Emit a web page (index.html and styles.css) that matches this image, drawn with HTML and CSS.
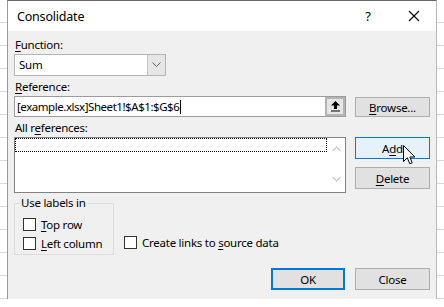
FILE: index.html
```html
<!DOCTYPE html>
<html lang="en">
<head>
    <meta charset="UTF-8">
    <title>Consolidate</title>
    <link rel="stylesheet" href="styles.css">
</head>
<body>

    <div class="dialog">

        <!-- Title bar -->
        <div class="titlebar">
            <span class="title">Consolidate</span>
            <span class="help">?</span>
            <svg class="close-x" width="12" height="12" viewBox="0 0 12 12">
                <path d="M1 1 L11 11 M11 1 L1 11" stroke="#000" stroke-width="1.1" fill="none"/>
            </svg>
        </div>

        <div class="content">
            <div class="lbl"><u>F</u>unction:</div>
            <div class="select">
                <span class="select-value">Sum</span>
                <span class="select-btn">
                    <svg width="9" height="6" viewBox="0 0 9 6">
                        <path d="M0.5 0.5 L4.5 4.5 L8.5 0.5" stroke="#606060" stroke-width="1" fill="none"/>
                    </svg>
                </span>
            </div>

            <div class="lbl lbl-ref"><u>R</u>eference:</div>
            <div class="row">
                <div class="input">
                    <span class="input-text">[example.xlsx]Sheet1!$A$1:$G$6</span><span class="caret"></span>
                    <span class="ref-btn">
                        <svg width="9" height="11" viewBox="0 0 9 11">
                            <path d="M4.5 0 L9 4.5 L6 4.5 L6 8 L3 8 L3 4.5 L0 4.5 Z" fill="#000"/>
                            <rect x="0" y="9.5" width="9" height="1" fill="#000"/>
                        </svg>
                    </span>
                </div>
                <button class="btn btn-browse"><u>B</u>rowse...</button>
            </div>

            <div class="lbl lbl-all">All r<u>e</u>ferences:</div>
            <div class="row row-list">
                <div class="listbox">
                    <div class="list-items">
                        <div class="focus-item"></div>
                    </div>
                    <div class="scrollbar">
                        <svg width="9" height="6" viewBox="0 0 9 6">
                            <path d="M0.5 5 L4.5 1 L8.5 5" stroke="#c8c8c8" stroke-width="1.2" fill="none"/>
                        </svg>
                        <svg width="9" height="6" viewBox="0 0 9 6">
                            <path d="M0.5 1 L4.5 5 L8.5 1" stroke="#c8c8c8" stroke-width="1.2" fill="none"/>
                        </svg>
                    </div>
                </div>
                <div class="side">
                    <button class="btn btn-hover">A<u>d</u>d</button>
                    <button class="btn"><u>D</u>elete</button>
                </div>
            </div>

            <div class="options">
                <fieldset class="group">
                    <legend>Use labels in</legend>
                    <div class="check"><span class="box"></span><span><u>T</u>op row</span></div>
                    <div class="check"><span class="box"></span><span><u>L</u>eft column</span></div>
                </fieldset>
                <div class="check check-links"><span class="box"></span><span>Create links to <u>s</u>ource data</span></div>
            </div>

            <div class="actions">
                <button class="btn btn-default">OK</button>
                <button class="btn">Close</button>
            </div>
        </div>

        <!-- mouse pointer over the Add button -->
        <svg class="pointer" width="13" height="21" viewBox="0 0 13 21">
            <path d="M0.5 0.5 L0.5 16.5 L4.3 12.8 L6.8 18.8 L9.2 17.8 L6.8 12 L11.8 12 Z" fill="#fff" stroke="#000" stroke-width="1" stroke-linejoin="round"/>
        </svg>
    </div>

</body>
</html>
```

FILE: styles.css
```css
body {
    margin: 0;
    padding: 0;
    width: 444px;
    height: 307px;
    overflow: hidden;
    font-family: "Noto Sans", Arial, sans-serif;
    font-size: 11.5px;
    letter-spacing: -0.25px;
    color: #000;
    background-color: #fff;
    background-image: repeating-linear-gradient(to bottom, transparent 0, transparent 22px, #d8d8d8 22px, #d8d8d8 23px, transparent 23px, transparent 21px);
}
u {
    text-decoration-thickness: 1px;
    text-underline-offset: 2px;
}
.dialog {
    position: relative;
    margin-left: 7px;
    width: 428px;
    height: 298px;
    border-top: 1px solid #6a6a6a;
    border-left: 1px solid #9a9a9a;
    border-right: 1px solid #b8b8b8;
    background-color: #f0f0f0;
}
.titlebar {
    display: flex;
    align-items: center;
    height: 30px;
    background-color: #fff;
    padding-left: 9px;
}
.title {
    flex: 1;
    font-size: 12.5px;
    letter-spacing: -0.2px;
}
.help {
    width: 20px;
    text-align: center;
    font-size: 13px;
}
.close-x {
    margin: 0 16px 0 30px;
}
.content {
    padding: 6px 6px 0 6px;
}
.lbl {
    height: 16px;
    line-height: 16px;
    padding-left: 1px;
}
.select {
    display: flex;
    width: 150px;
    height: 20px;
    margin-top: 1px;
    border: 1px solid #b4b4b4;
    background-color: #fff;
}
.select-value {
    flex: 1;
    line-height: 20px;
    padding-left: 4px;
}
.select-btn {
    display: flex;
    align-items: center;
    justify-content: center;
    width: 17px;
    border-left: 1px solid #c4c4c4;
    background-color: #e6e6e6;
}
.lbl-ref {
    margin-top: 3px;
}
.row {
    display: flex;
    align-items: flex-end;
    gap: 9px;
    margin-top: 1px;
}
.input {
    display: flex;
    align-items: center;
    width: 330px;
    height: 19px;
    border: 1px solid #9c9c9c;
    background-color: #fff;
}
.input-text {
    padding-left: 2px;
    letter-spacing: -0.45px;
}
.caret {
    width: 1px;
    height: 14px;
    margin-left: 1px;
    background-color: #000;
}
.ref-btn {
    display: flex;
    align-items: center;
    justify-content: center;
    margin-left: auto;
    width: 16px;
    height: 15px;
    border: 2px solid #b4b4b4;
    background-color: #e6e6e6;
}
.btn {
    width: 75px;
    height: 21px;
    padding: 0;
    border: 1px solid #adadad;
    background-color: #e1e1e1;
    font-family: "Noto Sans", Arial, sans-serif;
    font-size: 11.5px;
    letter-spacing: -0.25px;
    color: #000;
}
.btn-browse {
    height: 20px;
}
.lbl-all {
    margin-top: 3px;
}
.row-list {
    align-items: flex-start;
}
.listbox {
    display: flex;
    width: 330px;
    height: 54px;
    border: 1px solid #828282;
    background-color: #fff;
}
.list-items {
    flex: 1;
}
.focus-item {
    height: 12px;
    border: 1px dotted #000;
}
.scrollbar {
    display: flex;
    flex-direction: column;
    justify-content: space-between;
    align-items: center;
    width: 18px;
    padding: 8px 0 10px;
}
.side {
    display: flex;
    flex-direction: column;
    gap: 8px;
}
.side .btn {
    height: 22px;
}
.btn-hover {
    border-color: #0078d7;
    background-color: #e5f1fb;
}
.options {
    display: flex;
    align-items: flex-end;
    margin-top: 2px;
}
.group {
    box-sizing: border-box;
    width: 100px;
    margin: 0;
    padding: 5px 4px 3px 8px;
    border: 1px solid #dcdcdc;
    white-space: nowrap;
}
.group legend {
    height: 16px;
    line-height: 16px;
    padding: 0 1px;
    margin-left: -3px;
}
.check {
    display: flex;
    align-items: center;
    gap: 5px;
    height: 16px;
    white-space: nowrap;
}
.check + .check {
    margin-top: 3px;
}
.box {
    flex: none;
    width: 11px;
    height: 11px;
    border: 1px solid #333;
    background-color: #fff;
}
.check-links {
    margin: 0 0 5px 10px;
}
.actions {
    display: flex;
    justify-content: flex-end;
    gap: 10px;
    margin-top: 13px;
}
.actions .btn {
    height: 22px;
}
.btn-default {
    width: 74px;
    border: 2px solid #0078d7;
}
.pointer {
    position: absolute;
    left: 395px;
    top: 144px;
}
```
